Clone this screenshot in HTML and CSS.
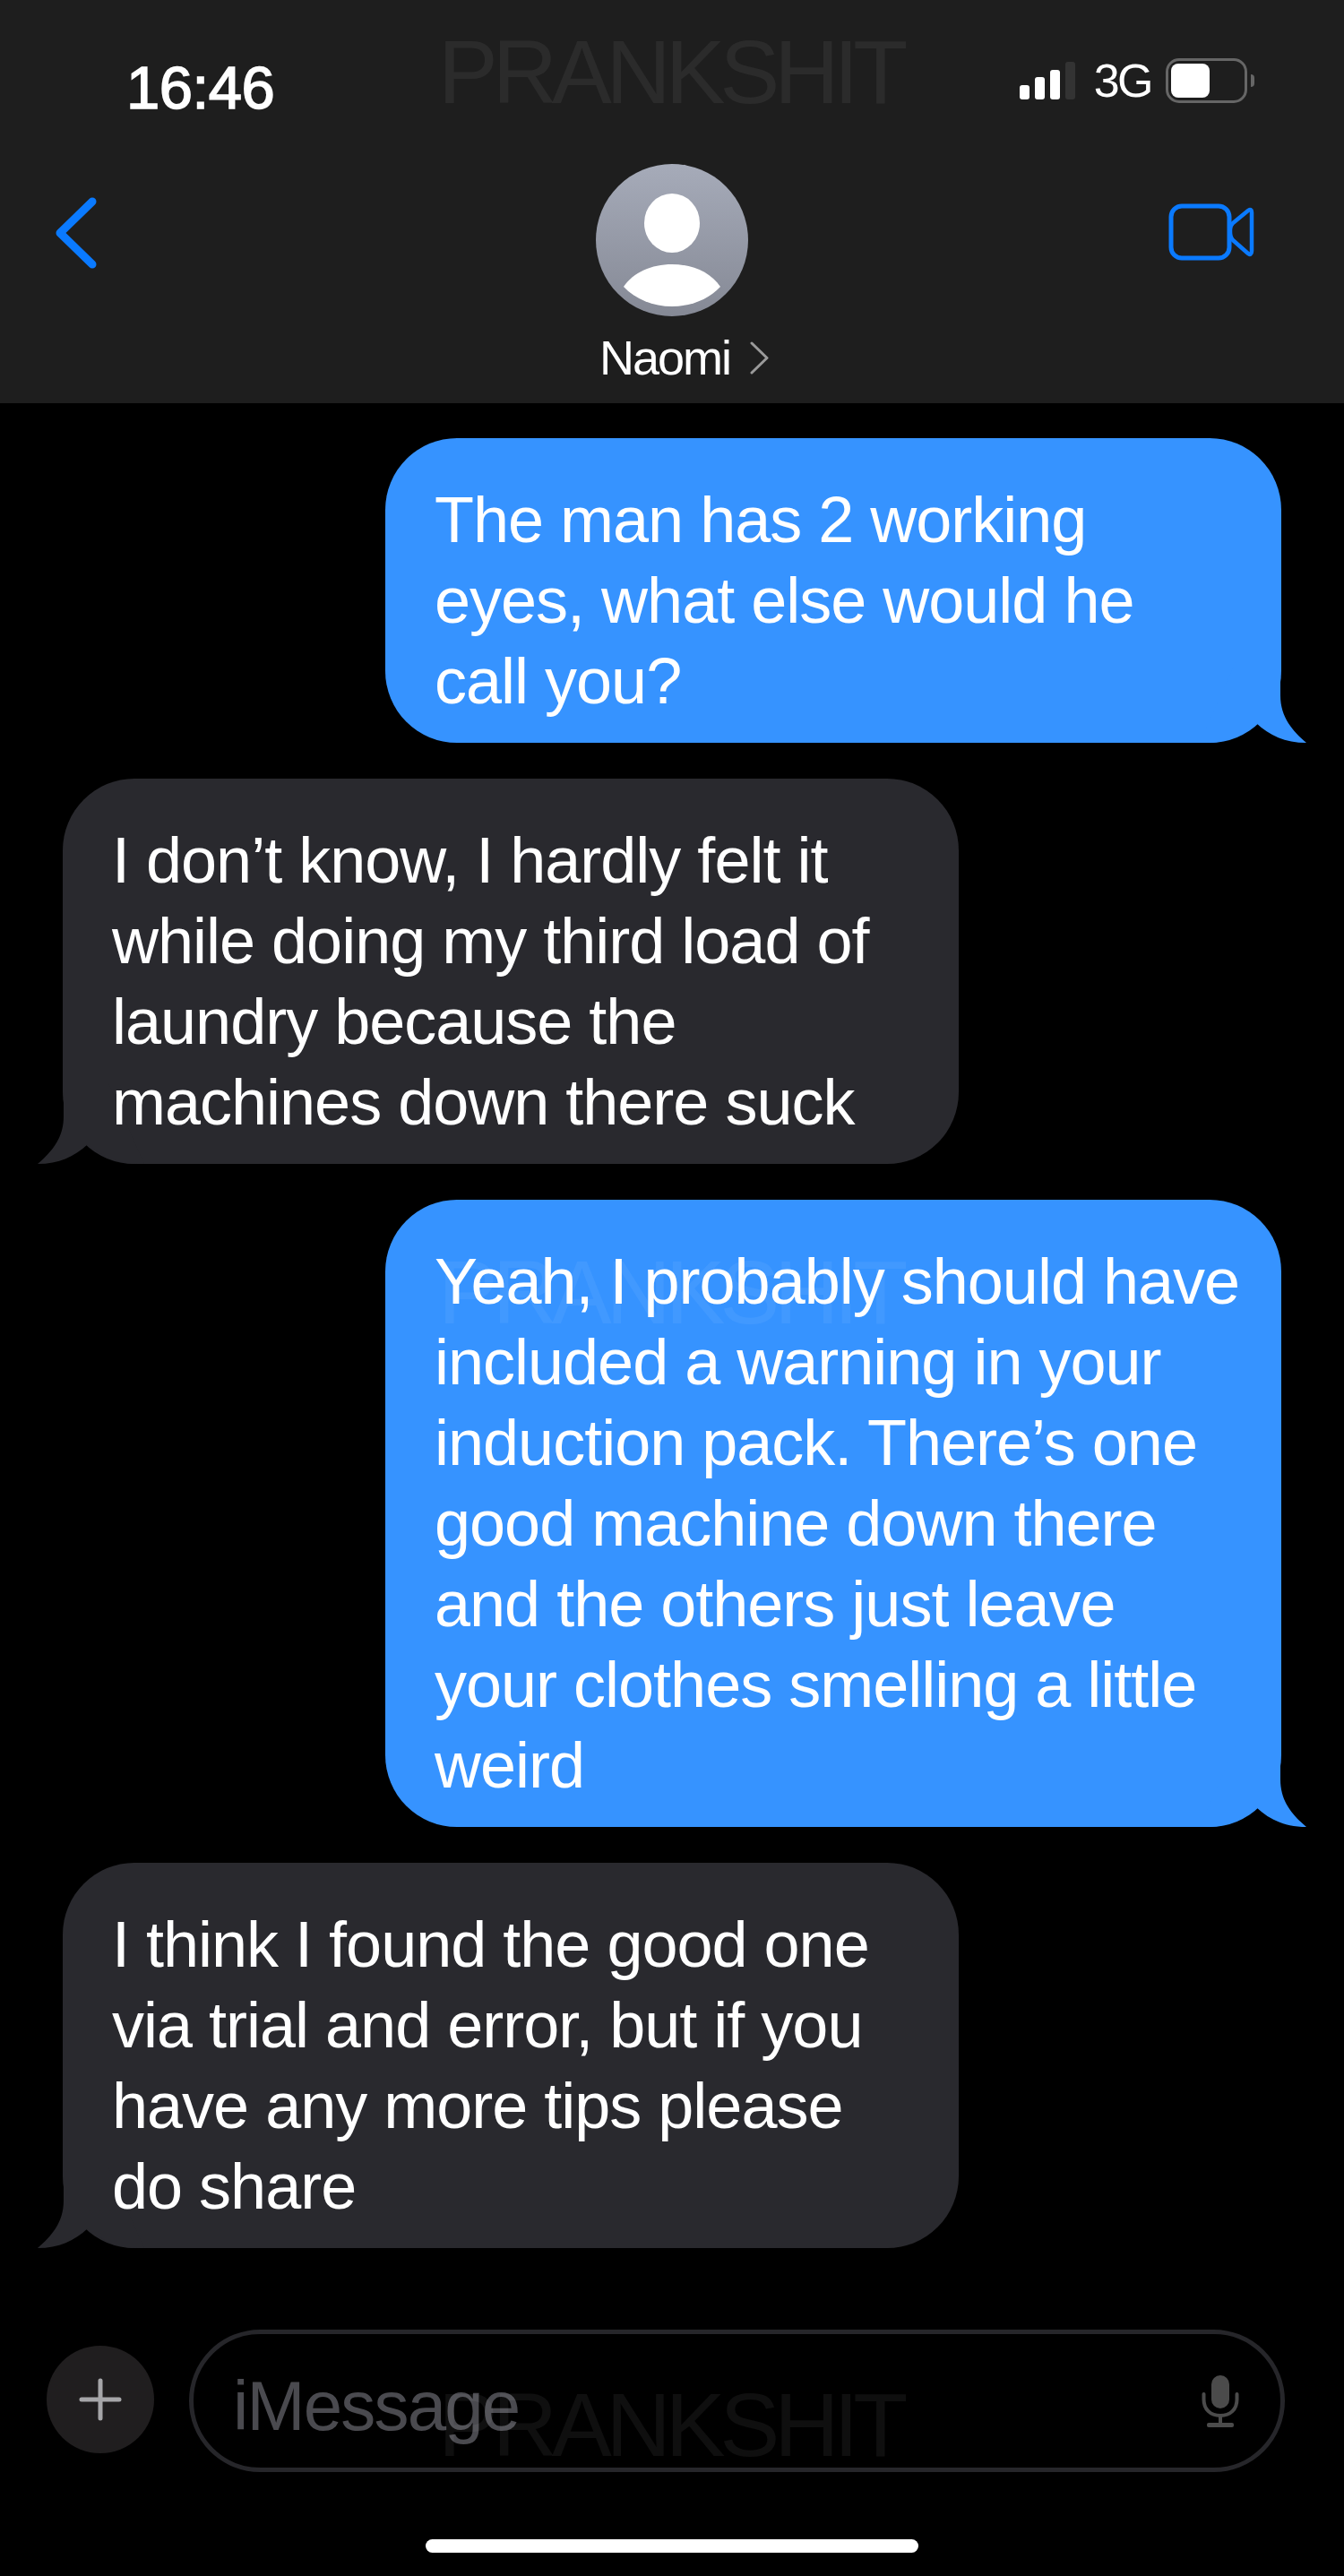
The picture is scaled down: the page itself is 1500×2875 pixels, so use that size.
FILE: index.html
```html
<!DOCTYPE html>
<html>
    <head>
        <title>Naomi</title>
        <link rel="stylesheet" href="styles.css">
    </head>
    <body>
        <header class="top">
            <div class="status">
                <span class="time">16:46</span>
                <div class="status-right">
                    <div class="signal">
                        <i class="bar b1"></i><i class="bar b2"></i><i class="bar b3"></i><i class="bar b4"></i>
                    </div>
                    <span class="net">3G</span>
                    <div class="battery"><div class="charge"></div></div>
                    <div class="nub"></div>
                </div>
            </div>
            <div class="nav">
                <svg class="back" width="46" height="80" viewBox="0 0 46 80">
                    <path d="M41 5 L5 40 L41 75" fill="none" stroke="#0a7aff" stroke-width="9" stroke-linecap="round" stroke-linejoin="round"/>
                </svg>
                <div class="contact">
                    <svg class="avatar" width="170" height="172" viewBox="0 0 170 172">
                        <defs>
                            <linearGradient id="avatarfill" x1="0" y1="0" x2="0" y2="1">
                                <stop offset="0" stop-color="#a6abb9"/>
                                <stop offset="1" stop-color="#858995"/>
                            </linearGradient>
                        </defs>
                        <circle cx="85" cy="86" r="85" fill="url(#avatarfill)"/>
                        <ellipse cx="85" cy="67" rx="31" ry="33" fill="#fff"/>
                        <path d="M31 138 C42 122 62 113 85 113 C108 113 128 122 139 138 C126 152 106 160 85 160 C64 160 44 152 31 138 Z" fill="#fff"/>
                    </svg>
                    <div class="name-row">
                        <span class="name">Naomi</span>
                        <svg width="22" height="37" viewBox="0 0 22 37">
                            <path d="M2 2 L19 18.5 L2 35" fill="none" stroke="#9a9a9a" stroke-width="3" stroke-linecap="round" stroke-linejoin="round"/>
                        </svg>
                    </div>
                </div>
                <svg class="video" width="96" height="64" viewBox="0 0 96 64">
                    <rect x="3" y="3" width="65" height="58" rx="12" fill="none" stroke="#0a7aff" stroke-width="5"/>
                    <path d="M69 30 C69 26 70 24 72 22 L89 8 C91 6 93 7 93 10 L93 53 C93 57 91 58 89 56 L72 41 C70 39 69 36 69 32 Z" fill="none" stroke="#0a7aff" stroke-width="4.5" stroke-linejoin="round"/>
                </svg>
            </div>
        </header>

        <main class="messages">
            <div class="bubble sent">
                The man has 2 working eyes, what else would he call you?
                <svg class="tail" width="120" height="90" viewBox="0 0 120 90"><path d="M0 90 L7 90 C30 90 47 82 63 68 C78 82 95 90 119 90 C104 77 90 62 90 37 L90 0 L40 0 Z"/></svg>
            </div>
            <div class="bubble received">
                I don’t know, I hardly felt it while doing my third load of laundry because the machines down there suck
                <svg class="tail" width="120" height="90" viewBox="0 0 120 90"><path d="M0 90 L7 90 C30 90 47 82 63 68 C78 82 95 90 119 90 C104 77 90 62 90 37 L90 0 L40 0 Z"/></svg>
            </div>
            <div class="bubble sent">
                Yeah, I probably should have included a warning in your induction pack. There’s one good machine down there and the others just leave your clothes smelling a little weird
                <svg class="tail" width="120" height="90" viewBox="0 0 120 90"><path d="M0 90 L7 90 C30 90 47 82 63 68 C78 82 95 90 119 90 C104 77 90 62 90 37 L90 0 L40 0 Z"/></svg>
            </div>
            <div class="bubble received">
                I think I found the good one via trial and error, but if you have any more tips please do share
                <svg class="tail" width="120" height="90" viewBox="0 0 120 90"><path d="M0 90 L7 90 C30 90 47 82 63 68 C78 82 95 90 119 90 C104 77 90 62 90 37 L90 0 L40 0 Z"/></svg>
            </div>
        </main>

        <div class="composer">
            <div class="plus">
                <svg width="48" height="48" viewBox="0 0 48 48">
                    <path d="M24 3 V45 M3 24 H45" stroke="#a6a6a9" stroke-width="5" stroke-linecap="round"/>
                </svg>
            </div>
            <div class="field">
                <span class="placeholder">iMessage</span>
                <svg width="42" height="58" viewBox="0 0 42 58">
                    <rect x="11" y="0" width="20" height="37" rx="10" fill="#4b4b4b"/>
                    <path d="M2.5 21 V27 C2.5 38 10 45 21 45 C32 45 39.5 38 39.5 27 V21" fill="none" stroke="#4b4b4b" stroke-width="4" stroke-linecap="round"/>
                    <path d="M21 45 V54" stroke="#4b4b4b" stroke-width="4"/>
                    <rect x="6" y="53" width="30" height="5" rx="2" fill="#4b4b4b"/>
                </svg>
            </div>
        </div>
        <div class="homebar"></div>

        <!-- watermark on top of everything -->
        <div class="mark mark1">PRANKSHIT</div>
        <div class="mark mark2">PRANKSHIT</div>
        <div class="mark mark3">PRANKSHIT</div>
    </body>
</html>
```

FILE: styles.css
```css
body{
    margin: 0;
    background-color: #000;
    color: #fff;
    font-family: "Liberation Sans", Arial, sans-serif;
    overflow: hidden;
    position: relative;
    height: 2875px;
}

/* header */
.top{
    background-color: #1e1e1e;
    height: 450px;
}
.status{
    display: flex;
    justify-content: space-between;
    height: 182px;
    padding: 0 100px 0 141px;
}
.time{
    margin-top: 62px;
    font-size: 67px;
    line-height: 72px;
    -webkit-text-stroke: 1.6px #fff;
    letter-spacing: -0.5px;
}
.status-right{
    display: flex;
    align-items: flex-start;
    padding-top: 65px;
}
.signal{
    display: flex;
    align-items: flex-end;
    gap: 6px;
    height: 42px;
    margin-top: 4px;
    margin-right: 21px;
}
.bar{
    display: block;
    width: 11px;
    border-radius: 3px;
    background-color: #fff;
}
.b1{ height: 16px; }
.b2{ height: 25px; }
.b3{ height: 33px; }
.b4{ height: 42px; background-color: #333; }
.net{
    font-size: 52px;
    line-height: 50px;
    letter-spacing: -2.5px;
    margin-right: 16px;
}
.battery{
    box-sizing: border-box;
    width: 91px;
    height: 50px;
    padding: 3px;
    border: 3px solid #666;
    border-radius: 15px;
}
.charge{
    width: 43px;
    height: 38px;
    border-radius: 8px;
    background-color: #fff;
}
.nub{
    width: 4px;
    height: 14px;
    margin: 18px 0 0 4px;
    border-radius: 0 4px 4px 0;
    background-color: #666;
}
.nav{
    display: grid;
    grid-template-columns: 1fr 170px 1fr;
    padding: 0 62px;
}
.back{
    margin-top: 38px;
}
.video{
    justify-self: end;
    margin-top: 45px;
    margin-right: 38px;
}
.contact{
    display: flex;
    flex-direction: column;
    align-items: center;
}
.avatar{
    display: block;
}
.name-row{
    display: flex;
    align-items: center;
    gap: 22px;
    margin-top: 20px;
    padding-left: 28px;
    white-space: nowrap;
}
.name{
    font-size: 54px;
    line-height: 50px;
    letter-spacing: -2px;
}

/* bubbles */
.messages{
    display: flex;
    flex-direction: column;
    gap: 40px;
    padding: 39px 70px 0;
}
.bubble{
    box-sizing: border-box;
    position: relative;
    isolation: isolate;
    width: 1000px;
    padding: 46px 45px 24px 55px;
    border-radius: 80px;
    font-size: 72px;
    line-height: 90px;
    letter-spacing: -1px;
}
.sent{
    align-self: flex-end;
    background-color: #3693ff;
}
.received{
    background-color: #29292e;
}
.tail{
    position: absolute;
    z-index: -1;
    bottom: 0;
    right: -29px;
}
.sent .tail{ fill: #3693ff; }
.received .tail{
    fill: #29292e;
    right: auto;
    left: -29px;
    transform: scaleX(-1);
}

/* input row */
.composer{
    display: flex;
    align-items: center;
    gap: 39px;
    margin-top: 91px;
    padding: 0 66px 0 52px;
}
.plus{
    display: flex;
    align-items: center;
    justify-content: center;
    flex: none;
    width: 120px;
    height: 120px;
    margin-top: -4px;
    border-radius: 50%;
    background-color: #201e1f;
}
.field{
    box-sizing: border-box;
    display: flex;
    align-items: center;
    justify-content: space-between;
    flex: 1;
    height: 159px;
    padding: 0 46px 0 44px;
    border: 5px solid #26262a;
    border-radius: 80px;
}
.placeholder{
    padding-top: 12px;
    font-size: 78px;
    letter-spacing: -1.8px;
    color: #4a4a4f;
}
.homebar{
    width: 550px;
    height: 15px;
    margin: 75px auto 0;
    border-radius: 8px;
    background-color: #fff;
}

/* watermark */
.mark{
    position: absolute;
    left: 489px;
    font-size: 100px;
    line-height: 100px;
    letter-spacing: -6px;
    color: rgba(255,255,255,0.06);
}
.mark1{ top: 30px; }
.mark2{ top: 1392px; }
.mark3{ top: 2656px; }
```
